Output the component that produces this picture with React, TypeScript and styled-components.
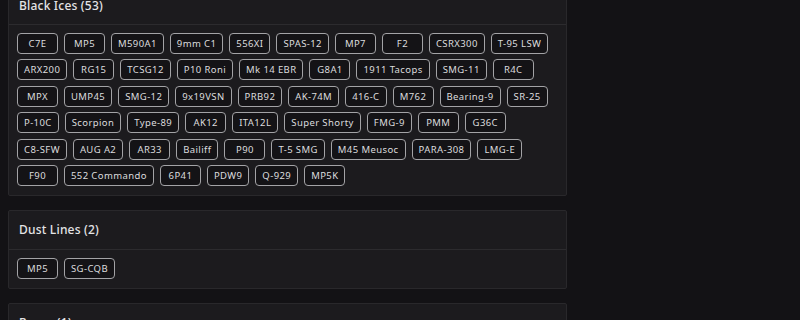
import React from 'react'
import styled, { createGlobalStyle } from 'styled-components'

const GlobalStyle = createGlobalStyle`
  html, body {
    margin: 0;
    padding: 0;
    background-color: #131215;
    overflow: hidden;
  }
  body {
    font-family: 'Noto Sans', 'DejaVu Sans', sans-serif;
  }
`

const Page = styled.div`
  width: 559px;
  margin: -15px 0 0 8px;
  display: flex;
  flex-direction: column;
  gap: 14px;
`

const Card = styled.section`
  background-color: #1c1b1e;
  border: 1px solid #29282b;
  border-radius: 2px;
`

const CardHeader = styled.div`
  height: 38px;
  display: flex;
  align-items: center;
  padding: 0 10px;
  border-bottom: 1px solid #2c2b2e;
`

const Title = styled.h3`
  margin: 0;
  font-size: 12px;
  font-weight: 500;
  color: #e4e4e6;
  letter-spacing: 0.2px;
`

const CardBody = styled.div`
  padding: 8px 8px 9px;
  display: flex;
  flex-direction: column;
  gap: 5.4px;
`

const ChipRow = styled.div`
  display: flex;
  gap: 6px;
`

const Chip = styled.span`
  box-sizing: border-box;
  height: 21px;
  min-width: 41px;
  padding: 0 6px;
  display: inline-flex;
  align-items: center;
  justify-content: center;
  background-color: #141316;
  border: 1px solid #a3a3a6;
  border-radius: 4px;
  color: #dcdcde;
  font-size: 9.5px;
  letter-spacing: 0.4px;
  white-space: nowrap;
`

const groups: { name: string; rows: string[][] }[] = [
  {
    name: 'Black Ices',
    rows: [
      ['C7E', 'MP5', 'M590A1', '9mm C1', '556XI', 'SPAS-12', 'MP7', 'F2', 'CSRX300', 'T-95 LSW'],
      ['ARX200', 'RG15', 'TCSG12', 'P10 Roni', 'Mk 14 EBR', 'G8A1', '1911 Tacops', 'SMG-11', 'R4C'],
      ['MPX', 'UMP45', 'SMG-12', '9x19VSN', 'PRB92', 'AK-74M', '416-C', 'M762', 'Bearing-9', 'SR-25'],
      ['P-10C', 'Scorpion', 'Type-89', 'AK12', 'ITA12L', 'Super Shorty', 'FMG-9', 'PMM', 'G36C'],
      ['C8-SFW', 'AUG A2', 'AR33', 'Bailiff', 'P90', 'T-5 SMG', 'M45 Meusoc', 'PARA-308', 'LMG-E'],
      ['F90', '552 Commando', '6P41', 'PDW9', 'Q-929', 'MP5K'],
    ],
  },
  {
    name: 'Dust Lines',
    rows: [['MP5', 'SG-CQB']],
  },
  {
    name: 'Roses',
    rows: [['SPAS-15']],
  },
]

export default function App() {
  return (
    <>
      <GlobalStyle />
      <Page>
        {groups.map((g) => {
          const count = g.rows.reduce((n, r) => n + r.length, 0)
          return (
            <Card key={g.name}>
              <CardHeader>
                <Title>
                  {g.name} ({count})
                </Title>
              </CardHeader>
              <CardBody>
                {g.rows.map((row, i) => (
                  <ChipRow key={i}>
                    {row.map((item) => (
                      <Chip key={item}>{item}</Chip>
                    ))}
                  </ChipRow>
                ))}
              </CardBody>
            </Card>
          )
        })}
      </Page>
    </>
  )
}
